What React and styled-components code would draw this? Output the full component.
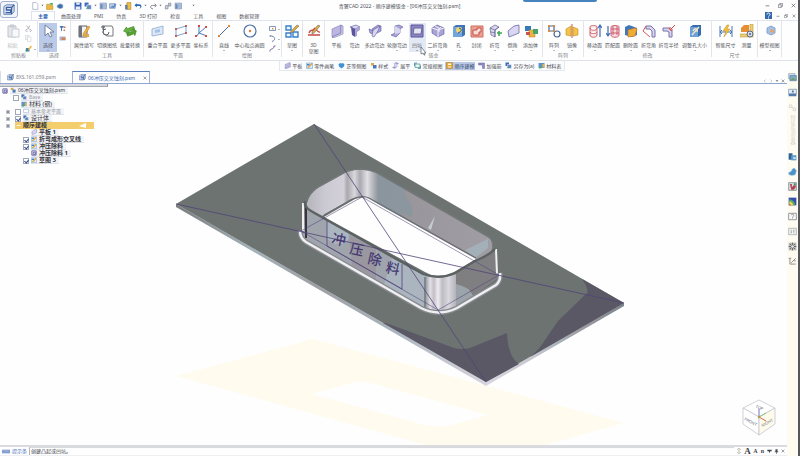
import * as React from "react"
import styled, { createGlobalStyle } from "styled-components"

const GlobalStyle = createGlobalStyle`
  * {
    box-sizing: border-box;
  }
  body {
    margin: 0;
    background: #fefefe;
    color: #50525a;
    font: 5px/6px "Noto Sans", "Noto Sans CJK SC", sans-serif;
  }
  button, input {
    font: inherit;
    color: inherit;
    margin: 0;
    padding: 0;
    border: 0;
    background: none;
  }
  svg {
    display: block;
    flex: none;
  }
`

const Window = styled.div`
  position: relative;
  display: flex;
  flex-direction: column;
  min-height: 100vh;
  border-right: 2px solid #55575a;
  white-space: nowrap;
`

const Header = styled.header`
  display: flex;
  height: 20px;
`
const AppButton = styled.button`
  width: 18px;
  height: 17px;
  margin: 1px 0 0;
  border: 1px solid #a3b3cf;
  border-radius: 3px;
  background: #f1f5fb;
  display: grid;
  place-items: center;
`
const HeaderRows = styled.div`
  flex: 1;
`
const TitleRow = styled.div`
  display: grid;
  grid-template-columns: 19fr auto 20fr;
  align-items: center;
  height: 11px;
`
const QuickAccess = styled.div`
  display: flex;
  align-items: center;
  gap: 2px;
  padding-left: 13px;
`
const WindowTitle = styled.h1`
  margin: 0;
  font-size: 5px;
  font-weight: 400;
  color: #4c4e56;
`
const Controls = styled.div`
  display: flex;
  justify-content: flex-end;
  align-items: center;
  gap: ${p => p.$gap}px;
  padding-right: 2px;
`
const MenuRow = styled.nav`
  display: flex;
  height: 9px;
`
const MenuTab = styled.button`
  height: 9px;
  padding: 0 6px;
  color: #55575e;
  margin-right: 1px;
  ${p => p.$active && `
    margin: 0 0 0 13px;
    border: 1px solid #dce3ee;
    border-bottom: 0;
    color: #2d64b4;
    font-weight: 700;
    background: #fff;
  `}
`
const Spacer = styled.div`
  flex: 1;
`

const Ribbon = styled.div`
  display: flex;
  height: 41px;
  border-top: 1px solid #dfe4ed;
  border-bottom: 1px solid #dfe2e8;
`
const Group = styled.section`
  position: relative;
  display: flex;
  flex-direction: column;
  width: ${p => p.$width}px;
  height: 36px;
  padding-top: 2px;
  border-right: 1px solid #e3e5ea;
`
const GroupItems = styled.div`
  display: flex;
  justify-content: center;
  height: 29px;
`
const GroupLabel = styled.div`
  text-align: center;
  color: #80828a;
  height: 6px;
`
const Tool = styled.button`
  width: ${p => p.$width}px;
  height: 29px;
  display: flex;
  flex-direction: column;
  align-items: center;
  padding-top: 1px;
  color: ${p => (p.$faded ? "#b9bcc4" : "#54565c")};
  background: ${p => p.$bg || "none"};
`
const ToolText = styled.span`
  margin-top: 4px;
  white-space: pre-line;
  line-height: 6px;
`
const Caret = styled.i`
  border: 1px solid transparent;
  border-top-color: #777;
  margin-top: 2px;
`
const SmallColumn = styled.div`
  display: flex;
  flex-direction: column;
  gap: 3px;
  width: 12px;
  padding: 2px 0 0 2px;
`
const SmallTool = styled.button`
  display: flex;
  align-items: center;
  gap: 2px;
  height: 7px;
`

const Shortcuts = styled.div`
  display: flex;
  align-items: center;
  align-self: flex-start;
  gap: 2px;
  height: 10px;
  margin-left: 35%;
  padding: 0 2px 0 3px;
  border: 1px solid #e6e8ee;
  border-top: 0;
  background: #fbfcfd;
`
const Shortcut = styled.button`
  display: flex;
  align-items: center;
  gap: 1px;
  height: 8px;
  padding: 0 1px;
  color: #4b4d55;
  ${p => p.$active && `
    background: #b9c9e6;
    color: #33476b;
  `}
`

const Body = styled.div`
  flex: 1;
  display: flex;
`
const Workspace = styled.main`
  flex: 1;
  display: flex;
  flex-direction: column;
  min-width: 0;
`
const DocTabs = styled.div`
  display: flex;
  align-items: flex-end;
  height: 13px;
  border-bottom: 1px solid #91a6cf;
`
const DocTab = styled.button`
  display: flex;
  align-items: center;
  gap: 2px;
  height: 12px;
  width: ${p => (p.$active ? 78 : 72)}px;
  padding: 0 2px 0 6px;
  border-left: 1px solid #d9dce3;
  color: #80838c;
  ${p => p.$active && `
    border: 1px solid #9db2d8;
    border-top: 1px solid #5d7fbd;
    border-bottom: 0;
    color: #3866b2;
  `}
`

const Viewport = styled.div`
  position: relative;
  flex: 1;
  display: flex;
  min-height: 300px;
`
const Scene = styled.svg`
  width: 100%;
  height: auto;
`
const TreePanel = styled.aside`
  position: absolute;
  top: 0;
  left: 0;
  width: 108px;
`
const PanelGrip = styled.div`
  height: 3px;
  background: #d5d7dc;
  border-right: 1px solid #8f949f;
  border-bottom: 1px solid #a4a8b1;
`
const TreeRow = styled.div`
  display: flex;
  align-items: center;
  gap: 2px;
  height: 7px;
  padding-left: ${p => p.$indent}px;
`
const Expander = styled.button`
  width: 4px;
  height: 4px;
  margin-right: 3px;
  border: 1px solid #bfc3cb;
  background: #8b909b;
`
const Check = styled.input`
  appearance: none;
  display: grid;
  place-items: center;
  width: 6px;
  height: 6px;
  flex: none;
  border: 1px solid #a0a8ba;
  background: #fff;
  &:checked::after {
    content: "";
    width: 2px;
    height: 3px;
    border: solid #33468a;
    border-width: 0 1px 1px 0;
    transform: rotate(40deg);
  }
`
const TreeLabel = styled.label`
  display: flex;
  align-items: center;
  gap: 2px;
  height: 7px;
  padding-right: 3px;
  line-height: 7px;
  font-size: ${p => (p.$small ? 5 : 6)}px;
  font-weight: ${p => (p.$bold ? 700 : 400)};
  color: ${p => (p.$faded ? "#9a9da5" : "#33353b")};
  background: #f3f4f8;
  border-bottom: 1px solid #e0e3ea;
`
const ActiveRow = styled(TreeLabel)`
  width: 79px;
  background: #f4ce6c;
  border: 0;
  padding-left: 1px;
  justify-content: space-between;
`
const CubeBox = styled.div`
  position: absolute;
  right: 11px;
  bottom: 8px;
`

const SideBar = styled.aside`
  display: flex;
  flex-direction: column;
  align-items: center;
  width: 11px;
  gap: 5px;
  padding-top: 1px;
  background: #fefbf0;
`
const SideButton = styled.button`
  display: grid;
  place-items: center;
  width: 10px;
  height: ${p => (p.$tall ? 44 : 10)}px;
`
const SideText = styled.span`
  writing-mode: vertical-rl;
  color: #d4d1cb;
`

const StatusBar = styled.footer`
  display: flex;
  align-items: center;
  gap: 2px;
  height: 11px;
  padding: 0 2px;
  border-top: 2px solid #dadbdf;
  border-bottom: 1px solid #eeeff2;
`
const StatusName = styled.span`
  color: #4f78bd;
`
const StatusText = styled.span`
  flex: 1;
  padding-left: 1px;
  border-left: 1px solid #b1b4bb;
  border-top: 1px solid #d7d9dd;
  line-height: 7px;
  color: #35373c;
`
const StatusGlyph = styled.button`
  width: ${p => (p.$big ? 7 : 5)}px;
  font: ${p => (p.$big ? "700 9px" : "700 6px")}/8px "Liberation Serif", serif;
  color: #3e4046;
`
const TopHandle = styled.div`
  position: absolute;
  top: 0;
  left: 65.6%;
  width: 74px;
  height: 2px;
  border-radius: 0 0 2px 2px;
  background: #4583bd;
`

const lilac = "#a9a3d6"
const lilacDark = "#59549c"
const lilacLight = "#d8d6f0"

/* every drawing sits on a 14 x 14 grid */
const drawings = {
  logo: (
    <>
      <path d="M1 3 4 1h9v8l-3 3H1z" fill="#dbe4f3" stroke="#5473a8" />
      <path d="M10 4H4v3h5v3H3M10 12V4l3-3" fill="none" stroke="#3b5f9f" strokeWidth="1.5" />
    </>
  ),
  page: <path d="M3 1h6l3 3v9H3z" fill="#fff" stroke="#8793ad" />,
  open: (
    <>
      <path d="M1 4h5l1 2h5v7H1z" fill="#eeb83f" stroke="#c38f26" />
      <path d="M6 5c0-3 3-4 5-3l1-1v4H8l1-1" fill="#49a44b" />
    </>
  ),
  dot: <path d="M2 6 7 3l5 2v5l-5 2-5-3z" fill="#416fad" stroke="#9eb3d5" />,
  save: (
    <>
      <path d="M1 1h11l1 1v11H1z" fill="#3761b6" />
      <path d="M4 1h6v4H4zM3 8h8v5H3z" fill="#e9eefa" />
    </>
  ),
  saveAll: (
    <>
      <path d="M1 1h7v7H1z" fill="#3f68ba" />
      <path d="M5 5h8v8H5z" fill="#6486c7" stroke="#fff" />
      <path d="m3 13 3-5 2 2" fill="#4ba565" />
    </>
  ),
  props: (
    <>
      <path d="M2 2h11v10H2z" fill="#e1e8f4" stroke="#4f6c9f" />
      <path d="M3 4h3v7H3zM7 4h5M7 6h5M7 8h5M7 10h5" stroke="#6d89bb" fill="#6d89bb" />
    </>
  ),
  picture: (
    <>
      <path d="M1 3h10v8H1z" fill="#bcd0eb" stroke="#5977ab" />
      <path d="m2 10 4-4 4 4zM10 2l3 3-5 6-1-2z" fill="#5889c8" />
    </>
  ),
  book: (
    <>
      <path d="M5 1h7v12H5z" fill="#f0bd45" stroke="#a87b25" />
      <path d="M2 5h4v8H2z" fill="#5976af" />
    </>
  ),
  undo: <path d="M4 2 1 6l4 3V7h4c3 0 3 4-1 5 6 0 7-8 1-8H5z" fill="#2c67b6" />,
  redo: <path d="M10 3 13 6l-3 3M12 6H6c-5 0-4 6 1 6" fill="none" stroke="#747986" strokeWidth="1.5" />,
  clamp: <path d="M2 12h5V7h5V2H8v4H3z" fill="#cfd5e0" stroke="#666e80" />,
  paste: (
    <>
      <path d="M2 2h8v11H2zM4 1h4v2H4z" fill="#e5e7ec" stroke="#c2c5cd" />
      <path d="M6 5h7v8H6z" fill="#f8f9fb" stroke="#c9ccd5" />
    </>
  ),
  cut: <path d="m3 1 6 8M10 1 5 9M4 9a2 2 0 1 0 1 3M10 9a2 2 0 1 1-1 3" fill="none" stroke="#9d9faa" strokeWidth="1.5" />,
  copy: (
    <>
      <path d="M1 1h7v8H1z" fill="#f5f6f8" stroke="#c1c4cc" />
      <path d="M5 4h7v9H5z" fill="#fff" stroke="#c1c4cc" />
    </>
  ),
  brush: (
    <>
      <path d="M2 6h7v7H2z" fill="#4a7eb9" />
      <path d="m6 8 6-7 2 2-6 8z" fill="#e9b73d" />
      <path d="M1 9h4v4H1z" fill="#3f9c65" />
    </>
  ),
  cursor: <path d="M4 1v11l3-3 2 4 2-1-2-4h4z" fill="#fff" stroke="#7381a2" />,
  filter: (
    <>
      <path d="M1 2h9L6 7v6L4 11V7z" fill="#427abb" />
      <path d="M9 3h4v3H9zM9 9h3v3H9z" fill="#d16b51" />
    </>
  ),
  box: (
    <>
      <path d="M1 3h12v8H1z" fill="#a4bddf" />
      <path d="M5 5h8v5H5z" fill="#dc7f51" />
    </>
  ),
  form: (
    <>
      <path d="M2 2h8v11H2z" fill="#f3f3f3" stroke="#60636b" />
      <path d="M2 2h3v11H2z" fill="#6f737a" />
      <path d="m6 10 5-8 2 1-5 8-2 1z" fill="#edb53b" stroke="#b97624" strokeWidth=".5" />
      <path d="M7 10h5v3H7z" fill="#dba84b" />
    </>
  ),
  sheet: (
    <>
      <path d="M4 2h8l1 2v8H7L3 9z" fill="#fff" stroke="#777980" />
      <path d="M1 3h4M3 1v5M9 8a3 3 0 1 1-3-3" fill="none" stroke="#5b5e66" />
    </>
  ),
  convert: (
    <>
      <path d="m5 2 0 2h7v3H5v2L1 5z" fill="#64b33e" stroke="#428428" strokeWidth=".6" transform="rotate(-20 7 7)" />
      <path d="m10 6 3 3-3 4v-2H3V8h7z" fill="#55a432" stroke="#428428" strokeWidth=".6" transform="rotate(-20 7 7)" />
    </>
  ),
  plane: (
    <>
      <path d="m1 5 11-3v8L1 12z" fill="#dde7f5" stroke="#9db7da" />
      <path d="M4 6 9 5v3L4 9z" fill="#a6c2e5" />
    </>
  ),
  planes: (
    <>
      <path d="m2 5 10-3v7L2 12z" fill="none" stroke="#7ca4d8" />
      <path d="M1 4h2v2H1zM11 1h2v2h-2zM1 11h2v2H1zM11 8h2v2h-2z" fill="#c95d54" />
    </>
  ),
  axes: (
    <>
      <path d="M5 1v8l8 3M5 9l7-6M5 9l-3 4" fill="none" stroke="#477dc0" />
      <path d="M4 1h2v2H4zM11 2h2v2h-2zM1 11h2v2H1zM11 11h2v2h-2z" fill="#d14d44" />
    </>
  ),
  line: (
    <>
      <path d="M2 12 12 2" stroke="#4b6d9d" />
      <path d="M1 11h2v2H1zM11 1h2v2h-2z" fill="#e08838" />
    </>
  ),
  circle: (
    <>
      <circle cx="7" cy="7" r="6" fill="#fff" stroke="#4d71a7" strokeWidth="1.2" />
      <circle cx="7" cy="7" r="1.2" fill="#e07a35" />
    </>
  ),
  rect: (
    <>
      <path d="M1 3h12v8H1z" fill="#fff" stroke="#6176a0" strokeWidth="1.5" />
      <path d="M6 6h3v3H6z" fill="#d39152" />
    </>
  ),
  arc: <path d="M2 2c10-1 13 8 4 11M1 2h3" fill="none" stroke="#6d7eac" strokeWidth="2" />,
  curve: <path d="M2 13c-1-8 8-2 8-11h3" fill="none" stroke="#7767a3" strokeWidth="2" />,
  sketch: (
    <>
      <path d="M1 2h5v4H1zM1 9h5v4H1zM8 8h5v5H8z" fill="#eff6fe" stroke="#3b80cb" strokeWidth="1.4" />
      <path d="m6 7 6-6 2 1-6 6-3 1z" fill="#e6a82f" stroke="#64636b" strokeWidth=".5" />
    </>
  ),
  sketch3d: (
    <>
      <path d="M1 11h12M2 9c2-5 4-1 5-4s3 4 6 3" fill="none" stroke="#c84a48" strokeWidth="1.4" />
      <path d="m5 8 6-7 2 1-6 7-2 1z" fill="#e2af43" stroke="#555965" strokeWidth=".5" />
    </>
  ),
  plate: (
    <>
      <path d="m2 5 9-4v8l-9 4z" fill="#bcb7e2" stroke="#8380b9" strokeWidth=".6" />
      <path d="m11 1 2 1v8l-10 4-1-1 9-4z" fill={lilacLight} stroke={lilacDark} strokeWidth=".5" />
    </>
  ),
  flange: (
    <>
      <path d="m2 3 6-2 4 2-5 2z" fill={lilacLight} stroke={lilacDark} strokeWidth=".6" />
      <path d="m3 3 4 2v8l-3-2z" fill={lilacDark} />
      <path d="m7 5 5-2v3L9 8v4l-2 1z" fill={lilac} />
    </>
  ),
  multi: (
    <>
      <path d="m1 5 5 2v3l-4-1zM4 5l6-4 3 1v5L9 9 5 7z" fill={lilac} stroke={lilacDark} strokeWidth=".6" />
      <path d="m5 6 7-4-2 5-4 6-2-1z" fill={lilacLight} stroke={lilacDark} strokeWidth=".6" />
    </>
  ),
  contour: (
    <>
      <path d="m5 2 4-1 4 2-3 2v4l-4 4-5-2 4-2z" fill={lilac} stroke={lilacDark} strokeWidth=".6" />
      <path d="m5 2 5 3v4l-5 1z" fill={lilacLight} />
    </>
  ),
  dimple: (
    <>
      <path d="M1 1h12v12H1z" fill="#8d87bd" stroke={lilacDark} />
      <path d="M4 4h8l-1 6H3z" fill="#e5e4f3" stroke="#6a649f" />
    </>
  ),
  bendCorner: (
    <>
      <path d="m1 4 5-3 7 3v6l-6 3-6-4z" fill={lilac} stroke={lilacDark} strokeWidth=".6" />
      <path d="M7 6v7M1 4l6 2 6-2M4 2l4 2v4M10 3 8 5" fill="none" stroke="#f4f3fc" />
    </>
  ),
  hole: (
    <>
      <path d="M1 3 4 1h9v10l-3 2H1z" fill="#3f75b8" />
      <path d="M1 3h9v10H1z" fill="#71a5db" />
      <circle cx="7" cy="6" r="3" fill="#f0d573" />
      <path d="M7 4c4 1 2 4-1 5" fill="none" stroke="#274c85" />
    </>
  ),
  closed: (
    <>
      <path d="M1 2h12v11H1z" fill="#eaa092" stroke="#cf6e61" />
      <path d="M3 6h4V4h4v4H9v3H3z" fill="#f7ded8" stroke="#c75148" />
    </>
  ),
  bend: (
    <>
      <path d="m2 4 5-3 4 2-4 3v7l-4-2z" fill={lilacLight} stroke="#66638f" strokeWidth=".7" />
      <path d="M2 4l5 2 4-3M7 6v7M3 8l4 1" stroke="#66638f" fill="none" strokeWidth=".7" />
      <path d="M11 7v5M9 9h5" stroke="#43a552" strokeWidth="1.6" />
    </>
  ),
  chamfer: <path d="m2 7 6-5 5-1v8L3 13z" fill={lilacLight} stroke="#8581b7" />,
  addBody: (
    <>
      <path d="M1 2h6v5H1z" fill="#347ab9" />
      <path d="M5 6h6v7H5z" fill="#efb33d" stroke="#b87820" strokeWidth=".5" />
      <path d="M9 5h5v5H9z" fill="#48a26c" />
      <path d="M2 8h4v3H2z" fill="#cf524a" />
    </>
  ),
  pattern: (
    <>
      <path d="M2 2h5v5H2z" fill="#fff" stroke="#43669f" strokeWidth="1.2" />
      <circle cx="10" cy="10" r="3" fill="#fff" stroke="#43669f" strokeWidth="1.2" />
      <path d="M1 1h2v2H1zM6 1h2v2H6zM1 6h2v2H1zM6 6h2v2H6z" fill="#d78b3e" />
    </>
  ),
  mirror: (
    <>
      <path d="M1 5 6 2v10l-5-1zM8 3l5 2v6l-5 1z" fill="#f4c447" stroke="#bd8e25" strokeWidth=".6" />
      <path d="M7 0v14" stroke="#ca5a3f" />
    </>
  ),
  moveFace: (
    <>
      <path d="M2 3c0-2 7-2 7 0v8c0 3-7 3-7 0zM2 4c0 3 7 3 7 0M2 8c0 2 7 2 7 0" fill="#fbe6e6" stroke="#cf6470" />
      <path d="M12 13V2M10 4l2-3 2 3" fill="none" stroke="#3b6db5" strokeWidth="1.2" />
    </>
  ),
  matchFace: (
    <>
      <path d="M5 3c0-2 8-2 8 0v8c0 3-8 3-8 0zM5 5h8M5 9h8M7 2v9M11 2v9" fill="#f8dce1" stroke="#cf5c70" />
      <path d="M2 2v9M0 9l2 3 2-3" fill="none" stroke="#3b6db5" strokeWidth="1.2" />
    </>
  ),
  deleteFace: (
    <>
      <path d="m1 3 4-2 8 3v7l-5 2-7-2z" fill="#3e78ba" />
      <path d="m4 6 7-2 2 1-2 7-7 1z" fill="#f0ac32" stroke="#bd762b" strokeWidth=".6" />
    </>
  ),
  bendAngle: (
    <>
      <path d="M4 2h5l4 4v7h-3V7L8 5H4z" fill={lilacLight} stroke="#7773a8" />
      <path d="M4 2 1 7l7 6" fill="none" stroke="#d15d58" />
    </>
  ),
  bendRadius: (
    <>
      <path d="M1 4h6l3 3v6H7V8L5 7H1z" fill={lilacLight} stroke="#7773a8" />
      <path d="m8 6 5-5M8 3v3h3" fill="none" stroke="#d6443f" />
    </>
  ),
  holeSize: (
    <>
      <path d="M2 3 5 1h8v10l-3 2H2z" fill="#386eb0" />
      <path d="M2 3h8v10H2z" fill="#6ca2d8" />
      <path d="m4 11 7-8M5 7c2-4 5-2 4 1" fill="none" stroke="#f5e7c9" strokeWidth="1.3" />
    </>
  ),
  smartDim: (
    <>
      <path d="M1 2v11M13 2v11M1 8h12M3 6 1 8l2 2M11 6l2 2-2 2" fill="none" stroke="#4976b2" />
      <path d="m8 1-4 6h3l-2 6 6-8H8l2-4z" fill="#f3bf39" stroke="#bc8c25" strokeWidth=".5" />
    </>
  ),
  measure: (
    <>
      <path d="M1 4 4 1h5v7H1z" fill="#e58e34" />
      <path d="M10 0h3v13H0v-3h10z" fill="#edcc72" stroke="#c59c3b" strokeWidth=".6" />
      <circle cx="10" cy="10" r="3" fill="#d7dde9" stroke="#596783" />
      <circle cx="10" cy="10" r="1" fill="#52617c" />
    </>
  ),
  modelView: (
    <>
      <path d="m4 4 4-2 4 2v5l-4 2-4-2z" fill="#a5c1e4" stroke="#86a6d3" />
      <path d="m8 5 3 1-1 3-3-1z" fill="#eda15f" />
    </>
  ),
  tree: (
    <>
      <path d="M2 2h6v5H2z" fill="#e1a849" />
      <path d="M6 6h7v7H6z" fill="#4a79b9" />
    </>
  ),
  material: (
    <>
      <path d="M1 2h12v10H1z" fill="#5f92cb" />
      <path d="M2 9h5v4H2z" fill="#54a777" />
      <path d="M9 4h4v7H9z" fill="#e2ba4e" />
    </>
  ),
  etched: (
    <>
      <path d="M1 2h12v11H1z" fill="#d9e8f8" stroke="#5294cf" />
      <path d="m2 11 9-9 2 2-8 8z" fill="#e2a63c" />
      <path d="M2 4h5v3H2z" fill="#3f7fc6" />
    </>
  ),
  cutout: <path d="M2 2h10v10H2zM5 5h5v5H5z" fill="#fff" stroke={lilacDark} strokeWidth="2" />,
  refPlane: <path d="M1 3h12v8H1z" fill="#fff" stroke="#b4c3da" strokeWidth="2" />,
  isometric: <path d="m1 5 3-3 3 1 3-1 3 3-1 4-5 4-5-4z" fill="#3e93d8" />,
  regular: (
    <>
      <path d="M2 4h10v7H2z" fill="#e8f4ee" stroke="#4d9c83" strokeWidth="1.5" />
      <path d="M1 8V2h5M13 7v6H8" fill="none" stroke="#3979b8" strokeWidth="1.5" />
    </>
  ),
  sequence: (
    <>
      <path d="M1 1h12v12H1z" fill="#edaa37" stroke="#ad7528" />
      <path d="M4 3h6v3H4zM4 9h6v2H4z" fill="#fff8e4" />
    </>
  ),
  rib: <path d="M1 2h12v11h-4V6H1z" fill="#8f8bc5" stroke="#6964a7" />,
  help: (
    <>
      <path d="M0 0h14v14H0z" fill="#3369b0" />
      <path d="M4 5c0-4 6-4 6 0 0 2-3 2-3 4m0 2v2" fill="none" stroke="#fff" strokeWidth="2" />
    </>
  ),
  min: <path d="M2 8h10" stroke="#55585f" strokeWidth="2" />,
  collapse: <path d="M2 7h10" stroke="#fff6dc" strokeWidth="3" />,
  restore: <path d="M1 5h8v8H1zM5 5V1h8v8H9" fill="none" stroke="#6d7078" strokeWidth="2" />,
  close: <path d="m2 2 10 10M12 2 2 12" stroke="#5d6068" strokeWidth="2" />,
  left: <path d="m9 2-5 5 5 5" fill="none" stroke="#a0a3ab" strokeWidth="2" />,
  right: <path d="m5 2 5 5-5 5" fill="none" stroke="#a0a3ab" strokeWidth="2" />,
  down: <path d="M2 4h10l-5 6z" fill="#666973" />,
  link: <path d="M2 3h4v4H2zM8 8h4v4H8zM6 6l3 3" fill="none" stroke="#c8c8ca" />,
  images: (
    <>
      <path d="M1 1h10v8H1z" fill="#d5e4ef" stroke="#81a0bc" />
      <path d="M3 4h10v8H3z" fill="#84adc5" stroke="#51769b" />
      <path d="m4 11 4-4 4 4z" fill="#6aa269" />
    </>
  ),
  drive: (
    <>
      <path d="M1 2h12v7H1z" fill="#e9eff6" stroke="#6683a5" />
      <path d="M1 9h12v4H1zM6 4h3v3H6z" fill="#537cab" />
    </>
  ),
  folder: (
    <>
      <path d="M1 2h6v10H1z" fill="#2d6298" />
      <path d="M5 5h8v8H5z" fill="#609bc8" />
      <path d="M8 8h4v3H8z" fill="#c7dfef" />
    </>
  ),
  parts: <path d="m1 9 4-2 2-4 3-1 3 4-2 6-5 1-4-1z" fill="#4b92c8" stroke="#78afd9" />,
  keyboard: (
    <>
      <path d="M1 1h12v12H1z" fill="#d6e1e5" stroke="#607582" />
      <path d="M3 3h3v5l3-3h3v3l-3 4H5z" fill="#b73f52" />
      <path d="M9 2h3v3H9z" fill="#3e9563" />
    </>
  ),
  heat: (
    <>
      <path d="M1 1h12v12H1z" fill="#3550ab" />
      <path d="M2 13V4c5 0 9 4 9 9z" fill="#5aac68" />
      <path d="M2 13V7c3 0 6 3 6 6z" fill="#f1d64e" />
      <path d="M2 13v-3l3 3z" fill="#d74735" />
    </>
  ),
  question: <path d="M1 2h12v10H1zM5 5c0-2 4-2 4 0S7 7 7 9v1" fill="#fafafa" stroke="#85888c" strokeWidth="1.3" />,
  sliders: <path d="M1 2h12v10H1zM5 4v6M9 4v6M4 8h2M8 6h2" fill="#f4f5f4" stroke="#95999b" />,
  gear: (
    <>
      <path d="M1 1h12v12H1z" fill="#b9b9b7" />
      <path d="M7 1v12M1 7h12M3 3l8 8M11 3l-8 8" stroke="#66696b" strokeWidth="1.5" />
      <circle cx="7" cy="7" r="2" fill="#eee" />
    </>
  ),
  steps: <path d="M3 2v9h9M5 9l7-7M1 2h4M9 6h3" fill="none" stroke="#7c7e7e" strokeWidth="1.3" />,
  command: <path d="M0 2h14v10H0zM2 5h10M2 8h10" fill="#6d8bc4" stroke="#cad7ee" />,
  updown: <path d="m3 4 4-3 4 3M3 10l4 3 4-3M7 5v4" fill="none" stroke="#827a65" strokeWidth="1.5" />,
  pin: <path d="M4 1h6v6h2v2H8v4H6V9H2V7h2z" fill="#4b4e57" />,
  drop: <path d="M1 2h12v4H9l-2 6-2-6H1z" fill="#3f4249" />,
}

const Icon = ({ name, size = 7, width }) => (
  <svg width={width || size} height={size} viewBox="0 0 14 14" aria-hidden="true" preserveAspectRatio="none">
    {drawings[name]}
  </svg>
)

const menus = ["主要", "曲面处理", "PMI", "仿真", "3D 打印", "检查", "工具", "视图", "数据管理"]

// an empty entry leaves a gap between two clusters
const quick = [
  "page", "down", "open", "dot", "", "save", "saveAll", "down", "props", "picture", "down",
  "book", "undo", "down", "redo", "down", "clamp", "props", "", "down",
]

// tools are [icon, label, width, caret]
const groups = [
  {
    label: "剪贴板", width: 38,
    tools: [["paste", "粘贴", 20, false, { faded: true }]],
    small: [["cut"], ["copy"], ["brush", true]],
  },
  {
    label: "选择", width: 33,
    tools: [["cursor", "选择", 18, true, { bg: "#bccaea" }]],
    small: [["filter"], ["box"]],
  },
  {
    label: "工具", width: 73,
    tools: [["form", "属性填写", 23], ["sheet", "切换图纸", 23], ["convert", "批量转换", 23]],
  },
  {
    label: "平面", width: 69,
    tools: [["plane", "重合平面", 23], ["planes", "更多平面", 23], ["axes", "坐标系", 18]],
  },
  {
    label: "绘图", width: 69,
    tools: [["line", "直线", 17, true], ["circle", "中心和点画圆", 34, true]],
    small: [["rect", true], ["arc", true], ["curve", true]],
  },
  { label: "", width: 21, tools: [["sketch", "草图", 18, true]] },
  { label: "", width: 22, tools: [["sketch3d", "3D\n草图", 18]] },
  {
    label: "钣金", width: 218,
    tools: [
      ["plate", "平板", 18], ["flange", "弯边", 18], ["multi", "多边弯边", 22],
      ["contour", "轮廓弯边", 23, true], ["dimple", "凹坑", 17, true, { bg: "#e3e9f4" }],
      ["bendCorner", "二折弯角", 24, true], ["hole", "孔", 18, true], ["closed", "封闭", 18],
      ["bend", "折弯", 18, true], ["chamfer", "倒角", 18, true], ["addBody", "添加体", 18, true],
    ],
  },
  { label: "阵列", width: 41, tools: [["pattern", "阵列", 18, true], ["mirror", "镜像", 18, true]] },
  {
    label: "修改", width: 128,
    tools: [
      ["moveFace", "移动面", 18, true], ["matchFace", "匹配面", 18], ["deleteFace", "删除面", 18, true],
      ["bendAngle", "折弯角", 18], ["bendRadius", "折弯半径", 22], ["holeSize", "调整孔大小", 30, true],
    ],
  },
  { label: "尺寸", width: 46, tools: [["smartDim", "智能尺寸", 24], ["measure", "测量", 18]] },
  { label: "", width: 24, tools: [["modelView", "模型视图", 22, true]] },
]

const shortcuts = [
  ["plate", "平板"], ["etched", "零件画笔"], ["isometric", "正等侧图"], ["tree", "样式"],
  ["contour", "展平"], ["regular", "常规视图"], ["sequence", "顺序建模", true],
  ["rib", "加强筋"], ["saveAll", "另存为(a)"], ["material", "材料表"],
]

const sideTools = [
  "images", "drive", "link", "folder", "parts", "keyboard", "heat", "question", "sliders", "gear", "steps",
]

const treeItems = [
  { icon: "saveAll", text: "Base", indent: 13, checked: false, faded: true, small: true },
  { icon: "material", text: "材料 (钢)", indent: 21 },
  { icon: "refPlane", text: "基本参考平面", indent: 6, expand: true, checked: false, faded: true, small: true },
  { icon: "saveAll", text: "设计体", indent: 6, expand: true, checked: true },
  { text: "顺序建模", indent: 6, expand: true, active: true },
  { icon: "chamfer", text: "平板 1", indent: 31, bold: true },
  { icon: "etched", text: "折弯成形交叉线", indent: 23, checked: true, bold: true },
  { icon: "etched", text: "冲压除料", indent: 23, checked: true, bold: true },
  { icon: "cutout", text: "冲压除料 1", indent: 31, bold: true },
  { icon: "etched", text: "草图 3", indent: 23, checked: true, bold: true },
]

const RibbonGroup = ({ group }) => (
  <Group $width={group.width}>
    <GroupItems>
      {group.tools.map(([icon, text, width, caret, look = {}]) => (
        <Tool key={text} $width={width} $bg={look.bg} $faded={look.faded}>
          <Icon name={icon} size={14} />
          <ToolText>{text}</ToolText>
          {caret && <Caret />}
        </Tool>
      ))}
      {group.small && (
        <SmallColumn>
          {group.small.map(([icon, caret]) => (
            <SmallTool key={icon} aria-label={icon}>
              <Icon name={icon} />
              {caret && <Caret />}
            </SmallTool>
          ))}
        </SmallColumn>
      )}
    </GroupItems>
    <GroupLabel>{group.label}</GroupLabel>
  </Group>
)

const TreeItem = ({ item, id }) => (
  <TreeRow $indent={item.indent}>
    {item.expand && <Expander aria-label="展开" />}
    {item.checked !== undefined && <Check type="checkbox" id={id} defaultChecked={item.checked} />}
    {item.active ? (
      <ActiveRow as="div" $bold>
        <Icon name="collapse" size={5} />
        <span>{item.text}</span>
        <Spacer />
        <svg width="12" height="5" viewBox="0 0 12 5"><path d="M0 3 7 0v5z" fill="#fff" /></svg>
      </ActiveRow>
    ) : (
      <TreeLabel
        as={item.checked === undefined ? "span" : "label"}
        htmlFor={item.checked === undefined ? undefined : id}
        $bold={item.bold}
        $faded={item.faded}
        $small={item.small}
      >
        <Icon name={item.icon} size={6} />
        {item.text}
      </TreeLabel>
    )}
  </TreeRow>
)

const Model = () => (
  <Scene viewBox="0 84 787 361" preserveAspectRatio="xMidYMid meet">
    <defs>
      <linearGradient id="edgeLeft" x1="0" x2="1" y1="0" y2="1">
        <stop offset="0" stopColor="#77797c" />
        <stop offset=".25" stopColor="#a4b2bb" />
        <stop offset=".45" stopColor="#9d9ea4" />
        <stop offset=".7" stopColor="#a9b4bd" />
        <stop offset="1" stopColor="#d7d4df" />
      </linearGradient>
      <linearGradient id="edgeRight" x1="0" x2="1">
        <stop offset="0" stopColor="#d9d6e1" />
        <stop offset=".35" stopColor="#c8c6ce" />
        <stop offset=".55" stopColor="#a4afb6" />
        <stop offset=".65" stopColor="#a19fa5" />
        <stop offset="1" stopColor="#78848a" />
      </linearGradient>
      <linearGradient id="backWall" x1="309" x2="491" y1="0" y2="0" gradientUnits="userSpaceOnUse">
        <stop offset="0" stopColor="#b9b7be" />
        <stop offset=".09" stopColor="#cbc9d2" />
        <stop offset=".19" stopColor="#d3d0da" />
        <stop offset=".21" stopColor="#aaa8ad" />
        <stop offset=".25" stopColor="#d8d7dc" />
        <stop offset=".28" stopColor="#aaa9b0" />
        <stop offset=".32" stopColor="#e0dfe4" />
        <stop offset=".36" stopColor="#a8abb1" />
        <stop offset=".38" stopColor="#8b959d" />
        <stop offset=".5" stopColor="#8b969f" />
        <stop offset=".52" stopColor="#98959b" />
        <stop offset="1" stopColor="#a19da4" />
      </linearGradient>
      <linearGradient id="cornerWall">
        <stop offset="0" stopColor="#9da1a5" />
        <stop offset=".14" stopColor="#e3e1e7" />
        <stop offset=".26" stopColor="#c1bfc5" />
        <stop offset=".4" stopColor="#efedf2" />
        <stop offset=".54" stopColor="#bdbcc3" />
        <stop offset=".75" stopColor="#d9d8df" />
        <stop offset="1" stopColor="#b3b3b9" />
      </linearGradient>
    </defs>

    {/* floor shadow */}
    <path d="M176 376 313 339 624 423 538 447H433z" fill="#fffbef" />
    <path d="m312 394 35-10q13-4 28 0l113 31-36 10q-16 3-31-1z" fill="#fefefe" />

    {/* plate */}
    <path d="m176 204 310 178v4L176 207z" fill="url(#edgeLeft)" />
    <path d="m486 382 138-79v3l-138 80z" fill="url(#edgeRight)" />
    <path d="M176 204 314 124 624 303 486 382z" fill="#6c7371" />
    <path d="M386 323 454 348q8 2 16 0l37-15q1 24 12 31l-33 18-103-59z" fill="#5a5865" />
    <path d="M582 279q7 10 5 14l-29 28-13 19q-6 10-15 17l94-54z" fill="#5a5865" />

    {/* raised opening, back walls */}
    <path d="M307 203q2-9 11-15l29-16q15-5 29 1l113 65q5 4 3 14l-17 9-107-62q-7-4-17 0l-29 17-15-7z" fill="url(#backWall)" />
    <path d="M400 187 405 190q-1 8 6 14 3 6 0 13l-11-6z" fill="#8b969f" />
    <path d="m435 216-7 12 3 2z" fill="#c5cdd2" />
    <path d="m465 250 23-11v9l-13 10z" fill="#a3b0b7" />
    <path d="M307 202q2-9 11-15l29-16q15-4 29 1l113 65q5 4 3 14" fill="none" stroke="#777a7c" strokeWidth="1" />

    {/* see-through floor */}
    <path d="m324 217 31-18q8-3 14 0l107 60-20 12q-16 10-31 1z" fill="#fefefe" />
    <path d="m324 215 31-17q8-3 14 0l107 60" fill="none" stroke="#686d6e" strokeWidth="1.2" />

    {/* front walls */}
    <path d="M305 202q2 5 6 8l115 65v34L307 241q-6-4-3-11z" fill="#a0a4ad" />
    <path d="m327 221 21 12q3 5-3 10l-10 1-8-5zM392 258l34 18v33l-42-24z" fill="#abb5bf" />
    <path d="m349 235 27 13v31l-24-14z" fill="#9a97a0" />
    <path d="M426 275q15 5 30-1v35q-15 6-30 0z" fill="url(#cornerWall)" />
    <path d="m456 273 40-24 2 29-42 31z" fill="#7f7e81" />
    <path d="M456 284q14 3 17 12l-17 13z" fill="#9aa4aa" />
    <path d="M306 205v33" stroke="#38343f" strokeWidth="2" />
    <path d="M303 203v28M496 249l1 25" stroke="#f1f0f4" strokeWidth="2" />
    <path d="M425 277v31" stroke="#55575c" />
    <path d="M305 201v4q2 4 6 6l112 63q16 6 32-1l20-12q13-5 20-12" fill="none" stroke="#5c6162" strokeWidth="2.4" />

    {/* bead round the base */}
    <path d="M300 231q0 7 6 11l115 66q18 9 36 0l39-23q5-4 4-12" fill="none" stroke="#888b8e" strokeWidth="5" />
    <path d="M300 231q0 7 6 11l115 66q18 9 36 0l39-23q5-4 4-12" fill="none" stroke="#f0eff3" strokeWidth="2.5" />

    {/* sketch geometry */}
    <g fill="none" stroke="#514478" strokeWidth=".8">
      <path d="m314 124 172 258M176 204l448 99" />
      <path d="m362 197-61 34 137 79 61-35z" strokeOpacity=".7" />
      <path d="M327 221v25l75 43v-25" />
    </g>
    <text
      x="331 349 367 385"
      y="243 253 263 272"
      rotate="12"
      fill="#453a74"
      fontSize="14"
      fontWeight="500"
      fontFamily="Noto Sans CJK SC"
    >
      冲压除料
    </text>
  </Scene>
)

const ViewCube = () => (
  <svg width="34" height="38" viewBox="742 399 34 38">
    <g stroke="#c4c4cf" strokeWidth=".8" strokeLinejoin="round">
      <path d="m759 400 16 8-16 9-16-9z" fill="#fff" />
      <path d="m743 408 16 9v18l-16-11z" fill="#fff" />
      <path d="m759 417 16-9v16l-16 11z" fill="#fffbea" />
    </g>
    <path d="M759 417v-8" stroke="#7273c3" />
    <path d="m759 417 7-4" stroke="#7bc586" />
    <path d="m759 417 7 4" stroke="#d6665e" />
    <circle cx="759" cy="417" r="1.2" fill="#b49d47" />
    <g fill="#666a78" fontSize="4" fontFamily="Liberation Sans" textAnchor="middle">
      <text transform="translate(759 409) rotate(20)">TOP</text>
      <text transform="translate(750 423) rotate(28)">FRONT</text>
      <text transform="translate(768 424) rotate(-28)">RIGHT</text>
    </g>
  </svg>
)

const PointerBox = styled.div`
  position: absolute;
  left: 52.6%;
  top: 47px;
`

export default function App() {
  return (
    <Window>
      <GlobalStyle />
      <Header>
        <AppButton aria-label="应用程序"><Icon name="logo" size={12} /></AppButton>
        <HeaderRows>
          <TitleRow>
            <QuickAccess>
              {quick.map((name, i) => <Icon key={i} name={name} size={name === "down" ? 3 : 8} width={name ? 0 : 6} />)}
            </QuickAccess>
            <WindowTitle>青翼CAD 2022 - 顺序建模钣金 - [06冲压交叉蚀刻.psm]</WindowTitle>
            <Controls $gap={8}>
              <Icon name="min" size={5} />
              <Icon name="restore" size={5} />
              <Icon name="close" size={5} />
            </Controls>
          </TitleRow>
          <MenuRow>
            {menus.map((menu, i) => <MenuTab key={menu} $active={i === 0}>{menu}</MenuTab>)}
            <Spacer />
            <Controls $gap={4}>
              <Icon name="help" size={7} />
              <Icon name="min" size={4} />
              <Icon name="restore" size={4} />
              <Icon name="close" size={4} />
            </Controls>
          </MenuRow>
        </HeaderRows>
      </Header>
      <Ribbon>
        {groups.map((group, i) => <RibbonGroup key={i} group={group} />)}
      </Ribbon>
      <Shortcuts>
        {shortcuts.map(([icon, text, active]) => (
          <Shortcut key={text} $active={active}>
            <Icon name={icon} />
            {text}
          </Shortcut>
        ))}
      </Shortcuts>
      <Body>
        <Workspace>
          <DocTabs>
            <DocTab><Icon name="logo" />8XS.161.059.psm</DocTab>
            <DocTab $active>
              <Icon name="logo" />
              06冲压交叉蚀刻.psm
              <Spacer />
              <Icon name="close" size={4} />
            </DocTab>
            <Spacer />
            <Controls $gap={2}>
              <Icon name="left" size={4} />
              <Icon name="right" size={4} />
              <Icon name="down" size={4} />
              <Icon name="close" size={4} />
            </Controls>
          </DocTabs>
          <Viewport>
            <Model />
            <TreePanel>
              <PanelGrip />
              <TreeRow $indent={2}>
                <Icon name="cutout" size={6} />
                <TreeLabel as="span" $small>
                  <Icon name="tree" size={6} />
                  06冲压交叉蚀刻.psm
                </TreeLabel>
              </TreeRow>
              {treeItems.map((item, i) => <TreeItem key={i} id={`node${i}`} item={item} />)}
            </TreePanel>
            <CubeBox><ViewCube /></CubeBox>
          </Viewport>
          <StatusBar>
            <Icon name="command" size={5} width={8} />
            <StatusName>提示条</StatusName>
            <StatusText>创建凸起或凹坑。</StatusText>
            <Icon name="updown" size={6} />
            <StatusGlyph $big>A</StatusGlyph>
            <StatusGlyph>A</StatusGlyph>
            <StatusGlyph>n</StatusGlyph>
            <Icon name="drop" size={5} />
            <Icon name="pin" size={5} />
            <Icon name="close" size={4} />
          </StatusBar>
        </Workspace>
        <SideBar>
          {sideTools.map(name => (
            <SideButton key={name} aria-label={name} $tall={name === "link"}>
              <Icon name={name} size={9} />
              {name === "link" && <SideText>特征库浏览器</SideText>}
            </SideButton>
          ))}
        </SideBar>
      </Body>
      <TopHandle />
      <PointerBox>
        <svg width="6" height="9" viewBox="0 0 6 9"><path d="M1 0v7l2-1 1 2h1L4 6h2z" fill="#fff" stroke="#555b66" strokeWidth=".7" /></svg>
      </PointerBox>
    </Window>
  )
}
